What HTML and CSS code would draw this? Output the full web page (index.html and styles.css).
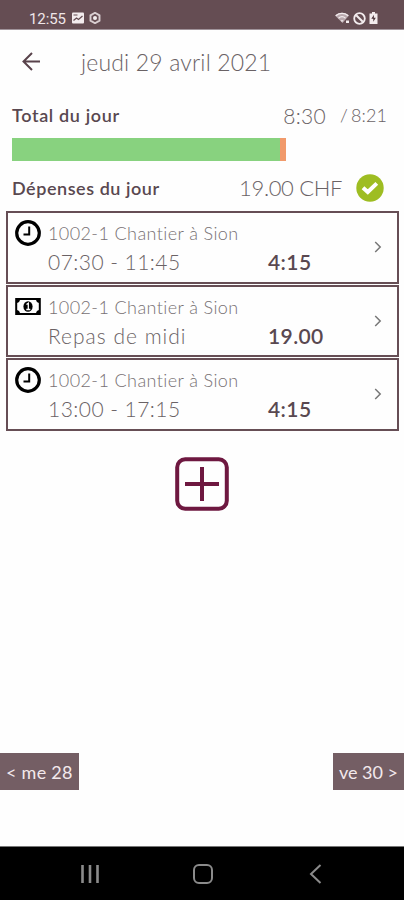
FILE: index.html
```html
<!DOCTYPE html>
<html lang="fr">
<head>
    <meta charset="UTF-8">
    <meta name="viewport" content="width=device-width, initial-scale=1.0">
    <title>jeudi 29 avril 2021</title>
    <link rel="stylesheet" href="styles.css">
</head>
<body>
    <div class="status-bar">
        <span class="time">12:55</span>
        <svg class="status-photo" width="12" height="12" viewBox="0 0 12 12">
            <rect x="0" y="0.5" width="12" height="11" rx="1" fill="#f3ecee"/>
            <path d="M1.500 8.500 4.500 6l2 1.500L10.500 4" fill="none" stroke="#654d53" stroke-width="1.300"/>
            <path d="M1.500 3h4" stroke="#654d53"/>
        </svg>
        <svg class="status-gear" width="12" height="12" viewBox="0 0 12 12">
            <path d="M6 .8 10.5 3.4v5.2L6 11.2 1.5 8.6V3.4z" fill="none" stroke="#d9ced1" stroke-width="1.9"/>
            <circle cx="6" cy="6" r="2" fill="#f3ecee"/>
        </svg>
        <div class="status-right">
            <svg width="15" height="12" viewBox="0 0 15 12">
                <path d="M0 3.5C4-.3 10-.3 14 3.5L7.5 11z" fill="#b9a8ad"/>
                <path d="M.8 3.7C4.5.6 9.5.6 13.2 3.7M3.5 6.2c2-1.7 5-1.7 7 0" fill="none" stroke="#f3ecee" stroke-width="1.2"/>
                <path d="M5.5 8.2h3L7 10zM11 8.5h3v2.5h-3z" fill="#f3ecee"/>
            </svg>
            <svg width="13" height="13" viewBox="0 0 13 13">
                <circle cx="6.5" cy="6.5" r="5.3" fill="none" stroke="#f3ecee" stroke-width="1.8"/>
                <path d="M3.2 3.2l6.6 6.6" stroke="#f3ecee" stroke-width="2"/>
            </svg>
            <svg width="9" height="12" viewBox="0 0 9 12">
                <path d="M3 0h3v1.5h2.5V12H.5V1.5H3z" fill="#f3ecee"/>
                <path d="M5 2.8 2.3 6.8h2v3l2.5-4h-2z" fill="#4b353b"/>
            </svg>
        </div>
    </div>

    <header class="header">
        <svg class="back" width="20" height="20" viewBox="0 0 20 20">
            <path d="M10 1 1.500 9.500 10 18M1.500 9.500H18" fill="none" stroke="#59434b" stroke-width="2"/>
        </svg>
        <h1 class="title">jeudi 29 avril 2021</h1>
    </header>

    <main class="content">
        <div class="summary total">
            <span class="label label-total">Total du jour</span>
            <span class="hours">8:30</span>
            <span class="target">/ 8:21</span>
        </div>

        <div class="progress">
            <div class="progress-done"></div>
            <div class="progress-over"></div>
        </div>

        <div class="summary expenses">
            <span class="label label-expenses">Dépenses du jour</span>
            <span class="amount">19.00 CHF</span>
            <svg class="check" width="28" height="28" viewBox="0 0 28 28">
                <circle cx="14" cy="14" r="13.7" fill="#9ebd22"/>
                <path d="M7 13.700l4.800 4.300 9-8.600" fill="none" stroke="#fff" stroke-width="4"/>
            </svg>
        </div>

        <div class="entries">
            <div class="entry">
                <svg class="entry-icon" width="26" height="26" viewBox="0 0 26 26">
                    <circle cx="13" cy="13" r="11.3" fill="none" stroke="#000" stroke-width="3.2"/>
                    <path d="M14.2 6.5v8H8.5" fill="none" stroke="#000" stroke-width="2"/>
                </svg>
                <div class="entry-text">
                    <div class="project">1002-1 Chantier à Sion</div>
                    <div class="detail">
                        <span class="period">07:30 - 11:45</span>
                        <span class="value">4:15</span>
                    </div>
                </div>
                <svg class="chevron" width="8" height="12" viewBox="0 0 8 12">
                    <path d="M1.2 1l5 5-5 5" fill="none" stroke="#777" stroke-width="1.5"/>
                </svg>
            </div>

            <div class="entry">
                <svg class="entry-icon" width="26" height="26" viewBox="0 0 26 26">
                    <rect x="1.200" y="5" width="23.600" height="15" fill="none" stroke="#000" stroke-width="2"/>
                    <path d="M1 5h4a4 4 0 0 1-4 4zM25 5h-4a4 4 0 0 0 4 4zM1 20h4a4 4 0 0 0-4-4zM25 20h-4a4 4 0 0 1 4-4z" fill="#000"/>
                    <ellipse cx="13" cy="12.500" rx="4.600" ry="5.300" fill="#000"/>
                    <path d="M11.5 10.500l1.800-1.200v5.800M11.300 15.500h4" fill="none" stroke="#fff" stroke-width="1.3"/>
                </svg>
                <div class="entry-text">
                    <div class="project">1002-1 Chantier à Sion</div>
                    <div class="detail">
                        <span class="period meal">Repas de midi</span>
                        <span class="value">19.00</span>
                    </div>
                </div>
                <svg class="chevron" width="8" height="12" viewBox="0 0 8 12">
                    <path d="M1.2 1l5 5-5 5" fill="none" stroke="#777" stroke-width="1.5"/>
                </svg>
            </div>

            <div class="entry">
                <svg class="entry-icon" width="26" height="26" viewBox="0 0 26 26">
                    <circle cx="13" cy="13" r="11.3" fill="none" stroke="#000" stroke-width="3.2"/>
                    <path d="M14.2 6.5v8H8.5" fill="none" stroke="#000" stroke-width="2"/>
                </svg>
                <div class="entry-text">
                    <div class="project">1002-1 Chantier à Sion</div>
                    <div class="detail">
                        <span class="period">13:00 - 17:15</span>
                        <span class="value">4:15</span>
                    </div>
                </div>
                <svg class="chevron" width="8" height="12" viewBox="0 0 8 12">
                    <path d="M1.2 1l5 5-5 5" fill="none" stroke="#777" stroke-width="1.5"/>
                </svg>
            </div>
        </div>

        <svg class="add" width="54" height="54" viewBox="0 0 54 54">
            <rect x="2.2" y="2.2" width="49.6" height="49.6" rx="8" fill="none" stroke="#6e1840" stroke-width="4"/>
            <path d="M27 10v34M10 27h34" stroke="#6e1840" stroke-width="4"/>
        </svg>
    </main>

    <div class="days">
        <div class="day day-prev">&lt; me 28</div>
        <div class="day">ve 30 &gt;</div>
    </div>

    <nav class="nav-bar">
        <svg width="20" height="20" viewBox="0 0 20 20">
            <path d="M2.500 1v18M10 1v18M17.500 1v18" stroke="#8b8b8b" stroke-width="2.6"/>
        </svg>
        <svg width="20" height="20" viewBox="0 0 20 20">
            <rect x="1" y="1" width="18" height="18" rx="5" fill="none" stroke="#8b8b8b" stroke-width="2"/>
        </svg>
        <svg width="20" height="20" viewBox="0 0 20 20">
            <path d="M14.5 1 5 10l9.5 9" fill="none" stroke="#8b8b8b" stroke-width="2"/>
        </svg>
    </nav>
</body>
</html>
```
FILE: styles.css
```css
* {
    box-sizing: border-box;
}

body {
    margin: 0;
    height: 900px;
    display: flex;
    flex-direction: column;
    background: #fefefe;
    color: #6a6265;
    font-family: Lato, "Open Sans", sans-serif;
    font-weight: 300;
    font-variant-ligatures: none;
    white-space: nowrap;
    overflow: hidden;
}

svg {
    display: block;
    flex-shrink: 0;
}

.status-bar {
    height: 30px;
    padding: 7px 26px 0 29px;
    display: flex;
    align-items: center;
    background: #654d53;
    border-bottom: 1px solid #a0939a;
    color: #efe6e8;
}

.time {
    width: 43px;
    padding-top: 1px;
    font-family: Roboto, sans-serif;
    font-size: 15px;
    font-weight: 400;
    letter-spacing: -0.1px;
}

.status-gear {
    margin-left: 5px;
}

.status-right {
    margin-left: auto;
    display: flex;
    align-items: center;
    gap: 3px;
}

.header {
    height: 65px;
    padding: 0 0 2px 22px;
    display: flex;
    align-items: center;
}

.title {
    margin: 0 0 0 39px;
    font-size: 23px;
    font-weight: 300;
    letter-spacing: 0.17px;
}

.content {
    flex: 1;
    display: flex;
    flex-direction: column;
}

.summary {
    display: flex;
    align-items: center;
    padding: 0 17px 0 12px;
}

.total {
    height: 40px;
}

.label {
    margin-right: auto;
    color: #594850;
    font-size: 18px;
    font-weight: 600;
}

.label-total {
    letter-spacing: 0.65px;
}

.label-expenses {
    letter-spacing: 0.55px;
}

.hours {
    font-size: 21px;
    letter-spacing: 0.3px;
    margin-right: 14px;
}

.target {
    font-size: 18px;
    letter-spacing: 0.1px;
    word-spacing: -2px;
}

.progress {
    display: flex;
    height: 23px;
    margin: 3px 0 0 12px;
}

.progress-done {
    width: 268px;
    background: #88d27f;
}

.progress-over {
    width: 6px;
    background: #f19a6b;
}

.expenses {
    height: 50px;
    padding-top: 3px;
    padding-right: 20px;
}

.amount {
    font-size: 22px;
    letter-spacing: -0.35px;
    margin-right: 14px;
}

.entries {
    display: flex;
    flex-direction: column;
    gap: 1px;
    margin: 0 5px 0 6px;
}

.entry {
    display: flex;
    height: 72.5px;
    padding: 7px 15px 0 7px;
    border: 2px solid #664e55;
}

.entry-text {
    flex: 1;
    margin-left: 7px;
}

.project {
    height: 26px;
    line-height: 26px;
    font-size: 18px;
    letter-spacing: 0.4px;
    color: #777073;
}

.detail {
    display: flex;
    height: 33px;
    line-height: 32px;
    font-size: 21px;
}

.period {
    width: 220px;
    letter-spacing: 0.45px;
}

.meal {
    letter-spacing: 1px;
}

.value {
    font-weight: 600;
    letter-spacing: 0.4px;
    color: #594850;
}

.chevron {
    margin-top: 21px;
}

.add {
    align-self: center;
    margin-top: 26px;
}

.days {
    display: flex;
    justify-content: space-between;
    margin-bottom: 56px;
}

.day {
    height: 37px;
    line-height: 38px;
    padding: 0 6px;
    background: #745e64;
    color: #f3e9ec;
    font-size: 18px;
    font-weight: 400;
}

.day-prev {
    letter-spacing: 0.28px;
}

.nav-bar {
    height: 54px;
    padding: 1px 78px 0 80px;
    display: flex;
    align-items: center;
    justify-content: space-between;
    background: #000;
    border-top: 1px solid #777;
}
```
